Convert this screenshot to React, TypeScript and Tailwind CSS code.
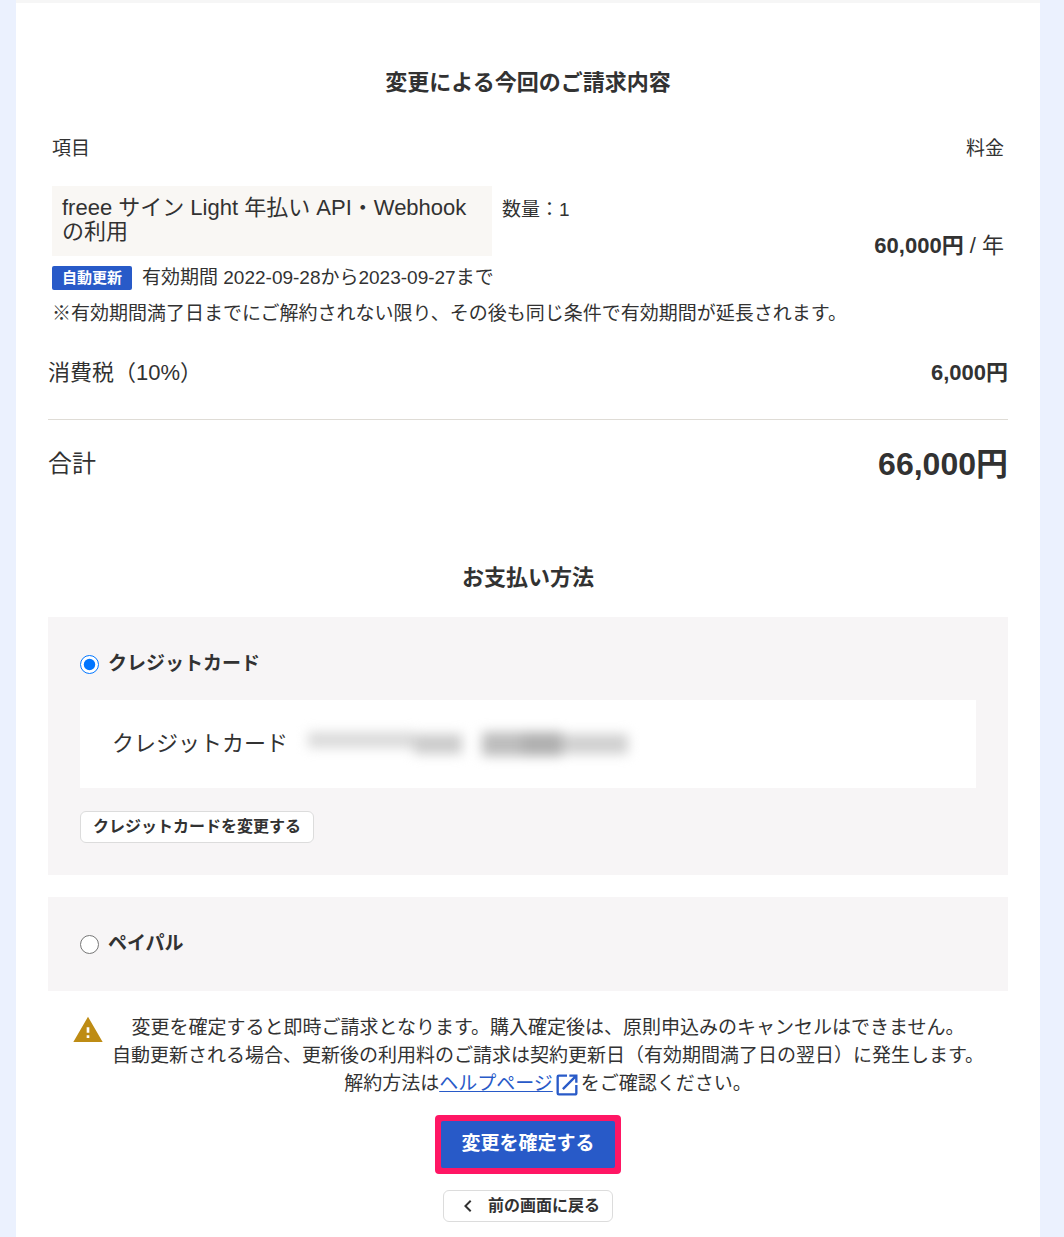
import React, { useState } from 'react';
import { MdChevronLeft, MdOpenInNew, MdWarning } from 'react-icons/md';

type PaymentMethod = 'card' | 'paypal';

interface MethodRadioProps {
    id: PaymentMethod;
    label: string;
    selected: PaymentMethod;
    onSelect: (method: PaymentMethod) => void;
}

const MethodRadio: React.FC<MethodRadioProps> = ({ id, label, selected, onSelect }) => (
    <div className="flex items-center gap-[9px]">
        <input
            id={id}
            type="radio"
            name="payment"
            checked={selected === id}
            onChange={() => onSelect(id)}
            className="size-[19px] accent-[#0075ff]"
        />
        <label htmlFor={id} className="text-[19px] leading-[30px] font-bold">{label}</label>
    </div>
);

// Masked card number and expiry date
const MaskedCard = () => (
    <div className="flex items-center blur-[6px]" aria-hidden="true">
        <div className="w-[106px] h-4 mb-2 bg-[#dadada]" />
        <div className="w-[48px] h-5 bg-[#cccccc]" />
        <div className="w-[40px] h-6 ml-5 bg-[#bdbdbd]" />
        <div className="w-[40px] h-6 bg-[#b0b0b0]" />
        <div className="w-[66px] h-5 bg-[#d0d0d0]" />
    </div>
);

const App: React.FC = () => {
    const [method, setMethod] = useState<PaymentMethod>('card');

    return (
        <div className="min-h-screen bg-[#ebf1fe] pl-4 pr-6 text-[#323232] font-['Liberation_Sans','Noto_Sans_CJK_JP',sans-serif]">
            <main className="min-h-screen bg-white border-t-[3px] border-[#f6f6f6] px-8 pt-16 pb-3">
                <h2 className="text-[22px] leading-8 font-bold text-center">変更による今回のご請求内容</h2>

                <table className="w-full mt-9 text-[19px] leading-7">
                    <thead>
                        <tr>
                            <th className="px-1 text-left font-normal">項目</th>
                            <th className="px-1 text-right font-normal">料金</th>
                        </tr>
                    </thead>
                    <tbody>
                        <tr>
                            <td className="px-1 pt-[23px]">
                                <div className="flex gap-[10px]">
                                    <div className="w-[440px] px-[10px] pt-[10px] pb-3 bg-[#f9f7f4] text-[22px] leading-6">
                                        freee サイン Light 年払い API・Webhook<br />の利用
                                    </div>
                                    <div className="pt-[10px]">数量：1</div>
                                </div>
                                <div className="flex items-center gap-[10px] mt-[10px] leading-6">
                                    <span className="px-[10px] rounded-xs bg-[#285ac8] text-white text-[15px] font-bold">自動更新</span>
                                    <span>有効期間 2022-09-28から2023-09-27まで</span>
                                </div>
                                <p className="mt-[10px]">※有効期間満了日までにご解約されない限り、その後も同じ条件で有効期間が延長されます。</p>
                            </td>
                            <td className="px-1 align-middle text-right text-[22px] whitespace-nowrap">
                                <b>60,000円</b> / 年
                            </td>
                        </tr>
                    </tbody>
                </table>

                <div className="flex justify-between mt-[29px] pb-[30px] border-b border-[#dfdcd6] text-[22px] leading-8">
                    <span>消費税（10%）</span>
                    <b>6,000円</b>
                </div>
                <div className="flex items-center justify-between mt-5 leading-[48px]">
                    <span className="text-2xl leading-[48px]">合計</span>
                    <b className="text-[32px] leading-[48px]">66,000円</b>
                </div>

                <h2 className="mt-[74px] text-[22px] leading-8 font-bold text-center">お支払い方法</h2>

                <section className="mt-[23px] p-8 bg-[#f7f5f6]">
                    <MethodRadio id="card" label="クレジットカード" selected={method} onSelect={setMethod} />
                    <div className="flex items-center gap-5 mt-[21px] px-8 py-[30px] bg-white text-[22px] leading-7">
                        <span>クレジットカード</span>
                        <MaskedCard />
                    </div>
                    <button type="button" className="block h-8 mt-[23px] px-3 rounded-md border border-[#dcdcdc] bg-white text-base leading-6 font-bold">
                        クレジットカードを変更する
                    </button>
                </section>

                <section className="mt-[22px] p-8 bg-[#f7f5f6]">
                    <MethodRadio id="paypal" label="ペイパル" selected={method} onSelect={setMethod} />
                </section>

                <div className="flex justify-center gap-2 mt-[23px]">
                    <MdWarning className="shrink-0 size-8 text-[#be8c14]" />
                    <p className="text-[19px] leading-7 text-center">
                        変更を確定すると即時ご請求となります。購入確定後は、原則申込みのキャンセルはできません。<br />
                        自動更新される場合、更新後の利用料のご請求は契約更新日（有効期間満了日の翌日）に発生します。<br />
                        解約方法は
                        <a href="#help" className="text-[#285ac8] underline">ヘルプページ</a>
                        <MdOpenInNew className="inline size-7 -my-1 text-[#285ac8]" />
                        をご確認ください。
                    </p>
                </div>

                <div className="flex flex-col items-center gap-4 mt-[17px]">
                    <div className="rounded-sm border-[6px] border-[#ff1664] bg-[#ff1664]">
                        <button type="button" className="block h-[47px] px-5 rounded-xs bg-[#285ac8] text-white text-[19px] font-bold">
                            変更を確定する
                        </button>
                    </div>
                    <button type="button" className="flex items-center gap-2 h-8 px-3 rounded-md border border-[#dcdcdc] bg-white text-base font-bold">
                        <MdChevronLeft className="size-6" />
                        前の画面に戻る
                    </button>
                </div>
            </main>
        </div>
    );
};

export default App;
